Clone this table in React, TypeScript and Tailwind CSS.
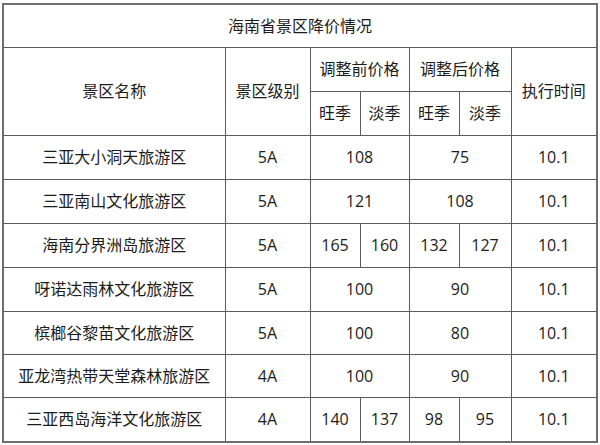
const rows: { name: string; level: string; before: string[]; after: string[]; date: string; h: string }[] = [
  { name: "三亚大小洞天旅游区", level: "5A", before: ["108"], after: ["75"], date: "10.1", h: "h-[44px]" },
  { name: "三亚南山文化旅游区", level: "5A", before: ["121"], after: ["108"], date: "10.1", h: "h-[44px]" },
  { name: "海南分界洲岛旅游区", level: "5A", before: ["165", "160"], after: ["132", "127"], date: "10.1", h: "h-[44px]" },
  { name: "呀诺达雨林文化旅游区", level: "5A", before: ["100"], after: ["90"], date: "10.1", h: "h-[44px]" },
  { name: "槟榔谷黎苗文化旅游区", level: "5A", before: ["100"], after: ["80"], date: "10.1", h: "h-[43px]" },
  { name: "亚龙湾热带天堂森林旅游区", level: "4A", before: ["100"], after: ["90"], date: "10.1", h: "h-[43px]" },
  { name: "三亚西岛海洋文化旅游区", level: "4A", before: ["140", "137"], after: ["98", "95"], date: "10.1", h: "h-[44px]" },
]

const cell = "border border-[#5c5c5c] p-0 text-center align-middle"

function Prices({ values }: { values: string[] }) {
  if (values.length === 1) {
    return (
      <td colSpan={2} className={cell}>
        {values[0]}
      </td>
    )
  }
  return (
    <>
      {values.map((v, i) => (
        <td key={i} className={cell}>
          {v}
        </td>
      ))}
    </>
  )
}

export default function App() {
  return (
    <div className="h-[445px] w-[600px] overflow-hidden bg-white pt-[3px] pl-[2px]">
      <div className="w-[596px] border-2 border-[#6e6e6e]">
        <table
          className="w-[592px] table-fixed border-collapse border-hidden text-[16px] leading-none text-[#1c1c1c]"
          style={{ fontFamily: '"Open Sans", "Noto Sans CJK SC", sans-serif' }}
        >
          <colgroup>
            <col className="w-[221px]" />
            <col className="w-[85px]" />
            <col className="w-[50px]" />
            <col className="w-[49px]" />
            <col className="w-[50px]" />
            <col className="w-[52px]" />
            <col className="w-[85px]" />
          </colgroup>
          <tbody>
            <tr className="h-[42px]">
              <td colSpan={7} className={cell}>
                海南省景区降价情况
              </td>
            </tr>
            <tr className="h-[44px]">
              <td rowSpan={2} className={cell}>
                景区名称
              </td>
              <td rowSpan={2} className={cell}>
                景区级别
              </td>
              <td colSpan={2} className={cell}>
                调整前价格
              </td>
              <td colSpan={2} className={cell}>
                调整后价格
              </td>
              <td rowSpan={2} className={cell}>
                执行时间
              </td>
            </tr>
            <tr className="h-[44px]">
              <td className={cell}>旺季</td>
              <td className={cell}>淡季</td>
              <td className={cell}>旺季</td>
              <td className={cell}>淡季</td>
            </tr>
            {rows.map((r) => (
              <tr key={r.name} className={r.h}>
                <td className={cell}>{r.name}</td>
                <td className={cell}>{r.level}</td>
                <Prices values={r.before} />
                <Prices values={r.after} />
                <td className={cell}>{r.date}</td>
              </tr>
            ))}
          </tbody>
        </table>
      </div>
    </div>
  )
}
